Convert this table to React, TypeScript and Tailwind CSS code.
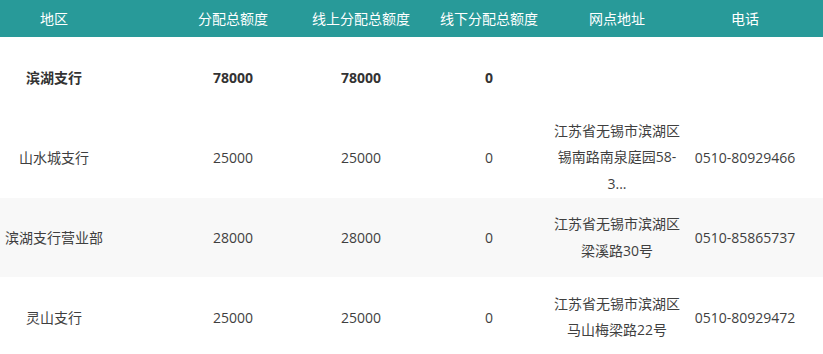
import React from "react";

type Row = {
  name: string;
  total: string;
  online: string;
  offline: string;
  address: string[];
  phone: string;
  bold?: boolean;
  height: string;
  striped?: boolean;
};

const rows: Row[] = [
  { name: "滨湖支行", total: "78000", online: "78000", offline: "0", address: [], phone: "", bold: true, height: "h-[80px]" },
  {
    name: "山水城支行",
    total: "25000",
    online: "25000",
    offline: "0",
    address: ["江苏省无锡市滨湖区", "锡南路南泉庭园58-", "3..."],
    phone: "0510-80929466",
    height: "h-[81px]",
  },
  {
    name: "滨湖支行营业部",
    total: "28000",
    online: "28000",
    offline: "0",
    address: ["江苏省无锡市滨湖区", "梁溪路30号"],
    phone: "0510-85865737",
    height: "h-[79px]",
    striped: true,
  },
  {
    name: "灵山支行",
    total: "25000",
    online: "25000",
    offline: "0",
    address: ["江苏省无锡市滨湖区", "马山梅梁路22号"],
    phone: "0510-80929472",
    height: "h-[80px]",
  },
];

const cols = "grid grid-cols-[108px_189px_128px_128px_128px_128px] items-center";

export default function App() {
  return (
    <div className="w-[823px] h-[354px] overflow-hidden bg-white text-[14px] font-['Open_Sans','Noto_Sans_CJK_SC',sans-serif]">
      {/* header */}
      <div className={`${cols} h-[37px] bg-[#289a99] text-white text-center`}>
        <div>地区</div>
        <div className="pl-[61px]">分配总额度</div>
        <div>线上分配总额度</div>
        <div>线下分配总额度</div>
        <div>网点地址</div>
        <div>电话</div>
      </div>

      {rows.map((r) => (
        <div
          key={r.name}
          className={`${cols} ${r.height} text-center ${r.striped ? "bg-[#f8f8f8]" : "bg-white"} ${
            r.bold ? "font-bold text-[#333]" : "text-[#3f3f3f]"
          }`}
        >
          <div className="whitespace-nowrap">{r.name}</div>
          <div className="pl-[61px]">{r.total}</div>
          <div>{r.online}</div>
          <div>{r.offline}</div>
          <div className="leading-[26.5px] whitespace-nowrap">
            {r.address.map((line) => (
              <div key={line}>{line}</div>
            ))}
          </div>
          <div className="whitespace-nowrap">{r.phone}</div>
        </div>
      ))}
    </div>
  );
}
